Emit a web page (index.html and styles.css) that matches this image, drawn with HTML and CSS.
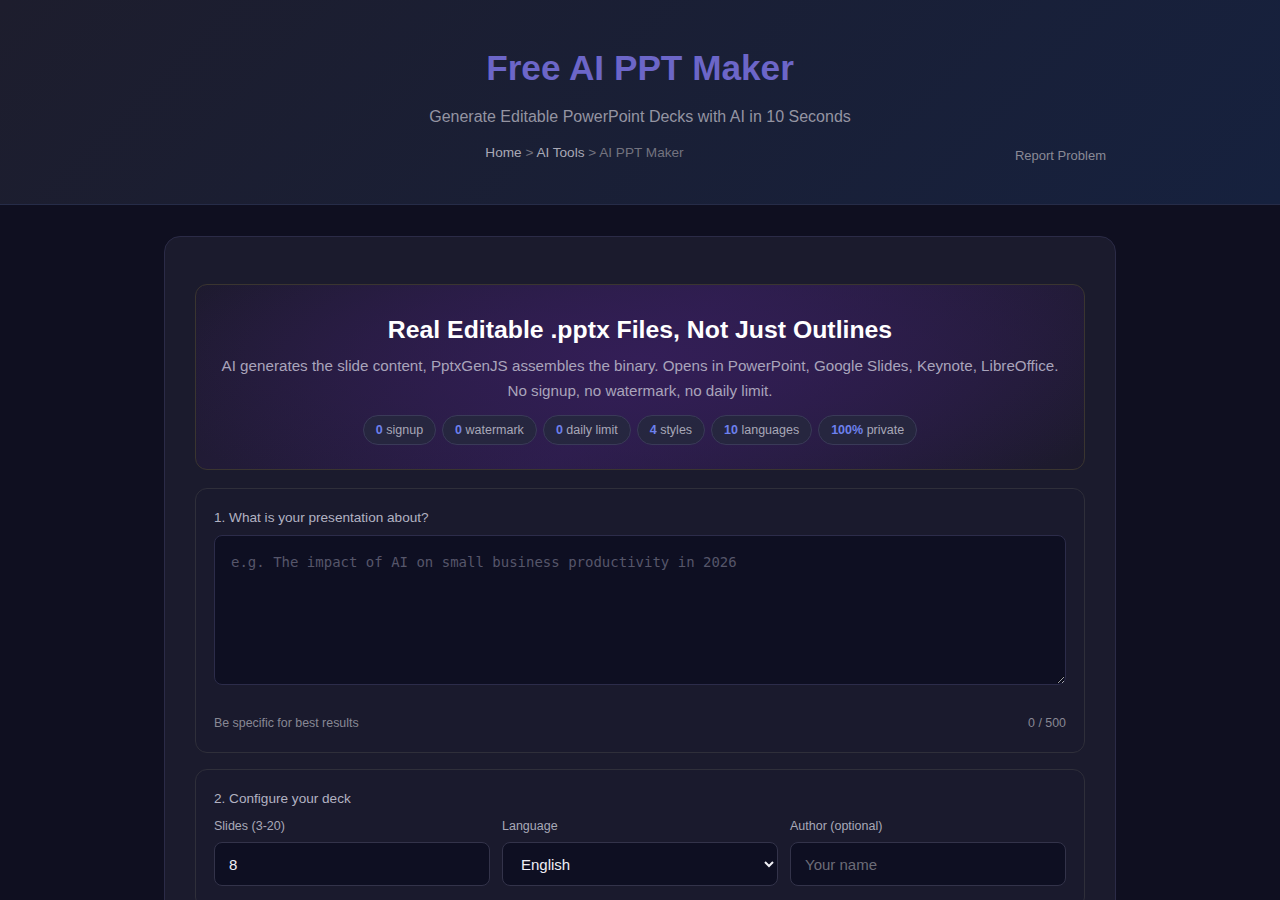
FILE: index.html
```html
<!DOCTYPE html>
<html lang="en">
<head>
    <meta charset="UTF-8">
    <meta name="viewport" content="width=device-width, initial-scale=1.0">
    <title>Free AI PPT Maker</title>
    <link rel="stylesheet" href="styles.css">
</head>
<body>
<header class="page-header">
    <h1 class="page-title">Free AI PPT Maker</h1>
    <p class="page-subtitle">Generate Editable PowerPoint Decks with AI in 10 Seconds</p>
    <div class="header-row">
        <nav class="breadcrumb">
            <a href="#">Home</a> &gt; <a href="#">AI Tools</a> &gt; AI PPT Maker
        </nav>
        <button class="report-btn" type="button">Report Problem</button>
    </div>
</header>

<main class="tool-card">
    <section class="hero">
        <h2>Real Editable .pptx Files, Not Just Outlines</h2>
        <p>AI generates the slide content, PptxGenJS assembles the binary. Opens in PowerPoint, Google Slides, Keynote, LibreOffice. No signup, no watermark, no daily limit.</p>
        <div class="pills">
            <span class="pill"><b>0</b> signup</span>
            <span class="pill"><b>0</b> watermark</span>
            <span class="pill"><b>0</b> daily limit</span>
            <span class="pill"><b>4</b> styles</span>
            <span class="pill"><b>10</b> languages</span>
            <span class="pill"><b>100%</b> private</span>
        </div>
    </section>

    <section class="step">
        <label class="step-label" for="topic">1. What is your presentation about?</label>
        <textarea id="topic" maxlength="500" placeholder="e.g. The impact of AI on small business productivity in 2026"></textarea>
        <div class="hint-row">
            <span>Be specific for best results</span>
            <span id="char-count">0 / 500</span>
        </div>
    </section>

    <section class="step">
        <div class="step-label">2. Configure your deck</div>
        <div class="config-grid">
            <div class="field">
                <label for="slides">Slides (3-20)</label>
                <input type="number" id="slides" min="3" max="20" value="8">
            </div>
            <div class="field">
                <label for="language">Language</label>
                <select id="language">
                    <option>English</option>
                    <option>Spanish</option>
                    <option>French</option>
                    <option>German</option>
                </select>
            </div>
            <div class="field">
                <label for="author">Author (optional)</label>
                <input type="text" id="author" placeholder="Your name">
            </div>
        </div>
    </section>
</main>

<script>
    var topic = document.getElementById("topic");
    topic.addEventListener("input", function () {
        document.getElementById("char-count").innerText = topic.value.length + " / 500";
    });
</script>
</body>
</html>
```

FILE: styles.css
```css
body {
    font-family: "Liberation Sans", "Arial", sans-serif;
    background-color: #0f0f20;
    color: #e4e4ee;
    margin: 0;
    padding: 0;
}

/* Header */
.page-header {
    background: linear-gradient(135deg, #1d1d2d 0%, #16213e 100%);
    border-bottom: 1px solid #262c48;
    padding: 49px 0 38px;
    text-align: center;
}

.page-title {
    margin: 0;
    font-size: 35.2px;
    line-height: 38px;
    font-weight: bold;
    color: #6c66c8;
}

.page-subtitle {
    margin: 21px 0 19px;
    font-size: 16px;
    line-height: 18px;
    color: #9494a2;
}

.header-row {
    max-width: 952px;
    margin: 0 auto;
    display: flex;
    align-items: flex-start;
}

.breadcrumb {
    flex: 1;
    text-align: center;
    font-size: 13.6px;
    line-height: 15px;
    color: #73737f;
}

.breadcrumb a {
    color: #a9a9b6;
    text-decoration: none;
}

.report-btn {
    background: none;
    border: none;
    padding: 3px 10px;
    font-family: inherit;
    font-size: 13px;
    line-height: 15px;
    color: #8a8a96;
    cursor: pointer;
}

/* Main card */
.tool-card {
    max-width: 890px;
    margin: 31px auto 0;
    padding: 47px 30px 30px;
    background-color: #1b1b2d;
    border: 1px solid #2b2b47;
    border-radius: 16px;
}

.hero {
    border: 1px solid #3a3530;
    border-radius: 12px;
    padding: 30px 20px 24px;
    text-align: center;
    background:
        radial-gradient(ellipse 60% 90% at 50% 40%, rgba(52, 30, 88, 0.9) 0%, rgba(52, 30, 88, 0) 100%),
        linear-gradient(135deg, #1c1a2c 0%, #2a1d48 50%, #1c1a2c 100%);
}

.hero h2 {
    margin: 0 0 8px;
    font-size: 24.8px;
    line-height: 30px;
    color: #ffffff;
}

.hero p {
    margin: 0 0 12px;
    font-size: 15.2px;
    line-height: 25px;
    color: #a9a4bb;
}

.pills {
    display: flex;
    justify-content: center;
    gap: 6px;
}

.pill {
    display: inline-block;
    height: 28px;
    line-height: 28px;
    padding: 0 12px;
    font-size: 12.5px;
    color: #a8a8b8;
    background-color: rgba(38, 40, 62, 0.9);
    border: 1px solid #3a3a58;
    border-radius: 15px;
}

.pill b {
    color: #6d80ee;
}

/* Steps */
.step {
    margin-top: 18px;
    padding: 21px 18px 22px;
    background-color: #1a1a2d;
    border: 1px solid #2f2f3a;
    border-radius: 12px;
}

.step + .step {
    margin-top: 16px;
}

.step-label {
    display: block;
    font-size: 13.6px;
    line-height: 16px;
    color: #b2b2c2;
    margin-bottom: 9px;
}

textarea {
    display: block;
    width: 100%;
    height: 150px;
    box-sizing: border-box;
    padding: 16px;
    background-color: #0e0f22;
    border: 1px solid #2c2c4a;
    border-radius: 8px;
    color: #e4e4ee;
    font-family: "DejaVu Sans Mono", monospace;
    font-size: 14px;
    line-height: 20px;
    resize: vertical;
}

textarea::placeholder {
    color: #56566a;
}

.hint-row {
    display: flex;
    justify-content: space-between;
    margin-top: 31px;
    font-size: 12.4px;
    line-height: 14px;
    color: #888894;
}

.config-grid {
    display: grid;
    grid-template-columns: repeat(3, 1fr);
    gap: 12px;
    margin-top: 12px;
}

.field label {
    display: block;
    font-size: 12.5px;
    line-height: 14px;
    color: #a9a9b8;
    margin-bottom: 9px;
}

.field input,
.field select {
    width: 100%;
    height: 44px;
    box-sizing: border-box;
    padding: 0 14px;
    background-color: #0e0f22;
    border: 1px solid #33334a;
    border-radius: 8px;
    color: #f0f0f6;
    font-family: inherit;
    font-size: 15px;
}

.field input::placeholder {
    color: #6c6c78;
}

.field input[type=number]::-webkit-inner-spin-button {
    opacity: 0;
}
```
